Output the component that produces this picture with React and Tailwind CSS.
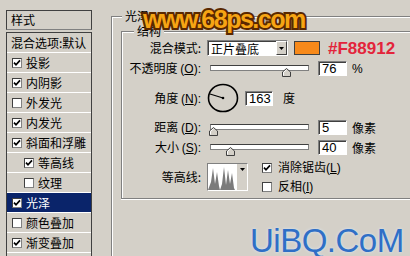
import React from "react";

const cjk = "font-['Noto_Sans_CJK_SC','Liberation_Sans',sans-serif]";

const Check = ({ checked }) => (
  <span className="flex h-[10px] w-[10px] shrink-0 items-center justify-center border border-[#404040] border-b-[#808080] border-r-[#808080] bg-white">
    {checked && (
      <svg width="8" height="8" viewBox="0 0 8 8">
        <path d="M1 3.6 L3 5.8 L7 1.4" stroke="#000" strokeWidth="1.7" fill="none" />
      </svg>
    )}
  </span>
);

const Field = ({ value, className = "w-[29px]" }) => (
  <div
    className={`flex h-[15px] items-center border border-b-white border-l-[#808080] border-r-white border-t-[#808080] bg-white pl-[3px] font-['Liberation_Sans',sans-serif] text-[13px] leading-none shadow-[inset_1px_1px_0_#404040] ${className}`}
  >
    {value}
  </div>
);

const Thumb = () => (
  <svg width="9" height="9" viewBox="0 0 9 9">
    <path d="M0.5 8.5 V4 L4.5 0.5 L8.5 4 V8.5 Z" fill="#d4d0c8" stroke="#404040" />
    <path d="M1.5 7.5 V4.4 L4.5 1.8" stroke="#fff" fill="none" />
  </svg>
);

const Slider = ({ pos }) => (
  <div className="relative ml-[9px] h-[15px] w-[99px]">
    <div className="absolute left-0 right-0 top-[4px] h-[6px] border border-[#808080] border-t-[#404040] bg-white" />
    <div className="absolute top-[7px]" style={{ left: pos }}>
      <Thumb />
    </div>
  </div>
);

const Label = ({ children }) => (
  <div className={`w-[79px] shrink-0 text-right text-[12px] leading-none ${cjk}`}>{children}</div>
);

const Key = ({ k }) => (
  <span className="font-['Liberation_Sans',sans-serif]">
    (<span className="underline">{k}</span>):
  </span>
);

const styles = [
  { name: "投影", checked: true },
  { name: "内阴影", checked: true },
  { name: "外发光", checked: false },
  { name: "内发光", checked: true },
  { name: "斜面和浮雕", checked: true },
  { name: "等高线", checked: true, sub: true },
  { name: "纹理", checked: false, sub: true },
  { name: "光泽", checked: true, active: true },
  { name: "颜色叠加", checked: false },
  { name: "渐变叠加", checked: true },
];

export default function App() {
  return (
    <div className={`relative flex h-[256px] w-[410px] overflow-hidden bg-[#d4d0c8] text-black ${cjk}`}>
      {/* left list */}
      <div className="ml-[6px] mt-[10px] flex w-[86px] shrink-0 flex-col text-[12px]">
        <div className="flex h-[20px] items-center border border-[#404040] border-b-[#808080] pl-[4px]">样式</div>
        <div className="mt-[2px] flex-1 border-x border-t border-[#404040]">
          <div className="flex h-[20px] items-center border-b border-white pl-[4px]">混合选项:默认</div>
          {styles.map((s) => (
            <div key={s.name} className="h-[20px] border-b border-white">
              <div
                className={`flex h-full items-center gap-[4px] ${s.sub ? "pl-[17px]" : "pl-[5px]"} ${
                  s.active ? "bg-[#0a246a] text-white" : ""
                }`}
              >
                <Check checked={s.checked} />
                <span>{s.name}</span>
              </div>
            </div>
          ))}
        </div>
      </div>

      {/* right group */}
      <div className="relative ml-[19px] mt-[16px] flex-1 border-l border-t border-[#808080] shadow-[inset_1px_1px_0_#fff]">
        <span className="absolute -top-[9px] left-[10px] bg-[#d4d0c8] px-[3px] text-[12px] leading-[16px]">光泽</span>
        <div className="relative ml-[9px] mt-[14px] h-[168px] border-y border-l border-[#808080] shadow-[inset_1px_1px_0_#fff,0_1px_0_#fff]">
          <span className="absolute -top-[9px] left-[12px] bg-[#d4d0c8] px-[3px] text-[12px] leading-[16px]">结构</span>

          {/* blend mode */}
          <div className="mt-[8px] flex h-[16px] items-center">
            <Label>混合模式:</Label>
            <div className="ml-[6px] flex h-[16px] w-[81px] border border-b-white border-l-[#808080] border-r-white border-t-[#808080] bg-white shadow-[inset_1px_1px_0_#404040]">
              <span className="flex-1 pl-[3px] pt-[1px] text-[12px] leading-[13px]">正片叠底</span>
              <span className="flex w-[11px] items-center justify-center border border-b-[#404040] border-l-white border-r-[#404040] border-t-white bg-[#d4d0c8]">
                <svg width="5" height="3" viewBox="0 0 5 3">
                  <path d="M0 0 H5 L2.5 3 Z" fill="#000" />
                </svg>
              </span>
            </div>
            <div className="ml-[6px] h-[14px] w-[26px] border border-[#404040] bg-[#f7891a]" />
            <span className="ml-[8px] font-['Liberation_Sans',sans-serif] text-[17px] font-bold leading-none text-[#e3243b]">
              #F88912
            </span>
          </div>

          {/* opacity */}
          <div className="mt-[5px] flex h-[15px] items-center">
            <Label>
              不透明度 <Key k="O" />
            </Label>
            <Slider pos={72} />
            <Field value="76" className="ml-[9px] w-[29px]" />
            <span className="ml-[5px] font-['Liberation_Sans',sans-serif] text-[12px]">%</span>
          </div>

          {/* angle */}
          <div className="mt-[7px] flex h-[30px] items-center">
            <Label>
              角度 <Key k="N" />
            </Label>
            <svg className="ml-[6px]" width="32" height="30" viewBox="0 0 32 30">
              <ellipse cx="16" cy="15" rx="14.5" ry="13.5" fill="none" stroke="#000" strokeWidth="1.6" />
              <path d="M16 15 L3 11" stroke="#000" strokeWidth="1.2" />
              <circle cx="16" cy="15" r="1.3" fill="#000" />
            </svg>
            <Field value="163" className="ml-[6px] w-[28px]" />
            <span className="ml-[10px] text-[12px]">度</span>
          </div>

          {/* distance */}
          <div className="mt-[7px] flex h-[15px] items-center">
            <Label>
              距离 <Key k="D" />
            </Label>
            <Slider pos={-1} />
            <Field value="5" className="ml-[9px] w-[29px]" />
            <span className="ml-[5px] text-[12px]">像素</span>
          </div>

          {/* size */}
          <div className="mt-[5px] flex h-[15px] items-center">
            <Label>
              大小 <Key k="S" />
            </Label>
            <Slider pos={16} />
            <Field value="40" className="ml-[9px] w-[29px]" />
            <span className="ml-[5px] text-[12px]">像素</span>
          </div>

          {/* contour */}
          <div className="mt-[8px] flex h-[28px] items-center">
            <Label>等高线:</Label>
            <div className="ml-[6px] flex h-[28px] w-[41px] border border-b-white border-l-[#808080] border-r-white border-t-[#808080] bg-white">
              <svg className="flex-1" viewBox="0 0 29 26" preserveAspectRatio="none">
                <path
                  d="M0 26 L3 18 L5 4 L7 20 L9 8 L11 22 L12 26 L14 20 L16 3 L18 21 L20 6 L22 20 L24 9 L26 24 L27 26 Z"
                  fill="#7b7b7b"
                />
              </svg>
              <span className="flex w-[10px] justify-center bg-[#d4d0c8] pt-[4px]">
                <svg width="5" height="3" viewBox="0 0 5 3">
                  <path d="M0 0 H5 L2.5 3 Z" fill="#000" />
                </svg>
              </span>
            </div>
            <div className="ml-[14px] flex flex-col gap-[6px] text-[12px] leading-none">
              <div className="flex items-center gap-[6px]">
                <Check checked />
                <span>
                  消除锯齿<span className="font-['Liberation_Sans',sans-serif]">(<span className="underline">L</span>)</span>
                </span>
              </div>
              <div className="flex items-center gap-[6px]">
                <Check checked={false} />
                <span>
                  反相<span className="font-['Liberation_Sans',sans-serif]">(<span className="underline">I</span>)</span>
                </span>
              </div>
            </div>
          </div>
        </div>
      </div>

      {/* watermarks */}
      <span className="absolute left-[143px] top-[7px] font-['Liberation_Sans',sans-serif] text-[25px] font-bold leading-none tracking-[-1.5px] text-[#f6a514] [-webkit-text-stroke:4px_#5a2800] [paint-order:stroke_fill]">
        www.68ps.com
      </span>
      <span className="absolute left-[250px] top-[224px] font-['Liberation_Sans',sans-serif] text-[33px] leading-none tracking-[-0.5px] text-[#2f6fc6] [text-shadow:0_0_3px_#d8e8f8]">
        UiBQ.CoM
      </span>
    </div>
  );
}
